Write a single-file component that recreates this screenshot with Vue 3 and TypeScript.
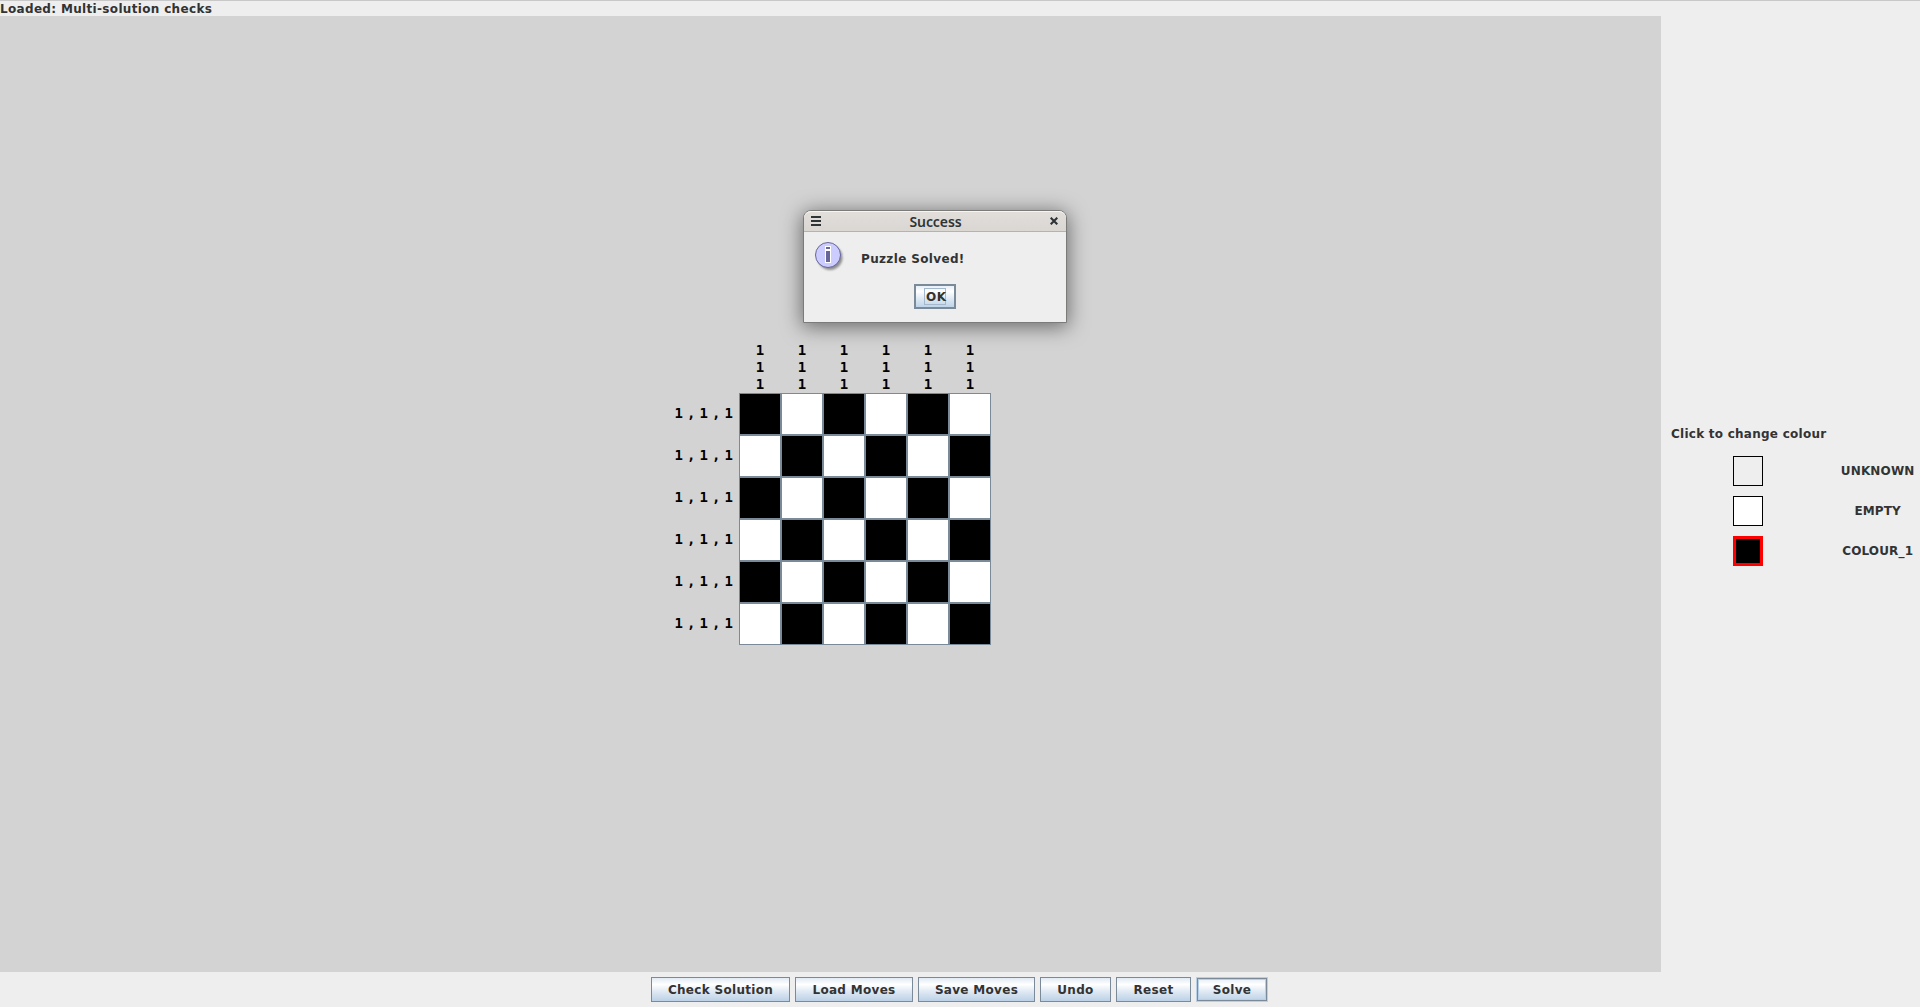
<script setup lang="ts">
const size = 6
const indices = Array.from({ length: size }, (_, i) => i)
const columnClue = ['1', '1', '1']
const rowClue = '1 , 1 , 1'
const filled = (row: number, col: number): boolean => (row + col) % 2 === 0

const colours = [
  { name: 'UNKNOWN', kind: 'unknown' },
  { name: 'EMPTY', kind: 'empty' },
  { name: 'COLOUR_1', kind: 'black' },
]

const actions = [
  { label: 'Check Solution', width: 139 },
  { label: 'Load Moves', width: 118 },
  { label: 'Save Moves', width: 117 },
  { label: 'Undo', width: 71 },
  { label: 'Reset', width: 75 },
  { label: 'Solve', width: 72, focused: true },
]
</script>

<template>
  <div class="window">
    <header class="status">Loaded: Multi-solution checks</header>
    <div class="body">
      <main class="canvas">
        <div class="puzzle">
          <div class="column-clues">
            <div v-for="c in indices" :key="c" class="column-clue">
              <span v-for="(n, i) in columnClue" :key="i">{{ n }}</span>
            </div>
          </div>
          <div v-for="r in indices" :key="r" class="row">
            <div class="row-clue">{{ rowClue }}</div>
            <div v-for="c in indices" :key="c" class="cell" :class="{ filled: filled(r, c) }"></div>
          </div>
        </div>
      </main>
      <aside class="palette">
        <div class="palette-title">Click to change colour</div>
        <div v-for="c in colours" :key="c.name" class="choice">
          <div class="swatch-area"><div class="swatch" :class="c.kind"></div></div>
          <div class="choice-name">{{ c.name }}</div>
        </div>
      </aside>
    </div>
    <footer class="actions">
      <button
        v-for="a in actions"
        :key="a.label"
        class="button"
        :class="{ focused: a.focused }"
        :style="{ width: a.width + 'px' }"
      >{{ a.label }}</button>
    </footer>

    <div class="dialog">
      <div class="titlebar">
        <svg class="menu" width="10" height="10" viewBox="0 0 10 10">
          <path d="M0 0h10v2H0zM0 4h10v2H0zM0 8h10v2H0z" fill="#2e3436" />
        </svg>
        <span class="dialog-title">Success</span>
        <svg class="close" width="8" height="8" viewBox="0 0 8 8">
          <path d="M0.7 0.7L7.3 7.3M7.3 0.7L0.7 7.3" stroke="#2e3436" stroke-width="2.1" fill="none" />
        </svg>
      </div>
      <div class="message">
        <svg class="info" width="32" height="32" viewBox="0 0 32 32">
          <defs>
            <filter id="soft" x="-30%" y="-30%" width="160%" height="160%">
              <feGaussianBlur stdDeviation="1.3" />
            </filter>
          </defs>
          <circle cx="15" cy="15.5" r="12.5" fill="#000" opacity=".4" filter="url(#soft)" />
          <circle cx="13" cy="13" r="12.5" fill="#ccccff" stroke="#666699" />
          <path d="M10 4h6v17h-6z" fill="#fff" />
          <path d="M11 5h4v2h-4zM11 9h4v11h-4z" fill="#666699" />
        </svg>
        <span class="message-text">Puzzle Solved!</span>
      </div>
      <button class="ok"><span class="ok-label">OK</span></button>
    </div>
  </div>
</template>

<style>
body {
  margin: 0;
  overflow: hidden;
}
</style>

<style scoped>
.window {
  position: relative;
  box-sizing: border-box;
  width: 1920px;
  height: 1007px;
  display: flex;
  flex-direction: column;
  border-top: 1px solid #c8c8c8;
  background: #eeeeee;
  color: #333333;
  font: bold 12px/15px "DejaVu Sans", sans-serif;
  letter-spacing: 0.3px;
  white-space: nowrap;
}
.status {
  height: 15px;
  line-height: 17px;
  letter-spacing: 0.33px;
}
.body {
  flex: none;
  height: 956px;
  display: flex;
}
.canvas {
  width: 1661px;
  background: #d3d3d3;
}
.puzzle {
  width: 318px;
  padding: 325px 0 0 673px;
  color: #000;
  font: bold 14px/17px "DejaVu Sans Mono", monospace;
  letter-spacing: 0;
}
.column-clues {
  box-sizing: border-box;
  display: flex;
  height: 52px;
  padding: 1px 0 0 66px;
}
.column-clue {
  width: 42px;
  display: flex;
  flex-direction: column;
  align-items: center;
}
.row {
  display: flex;
  height: 42px;
}
.row-clue {
  width: 60px;
  padding-right: 6px;
  line-height: 40px;
  text-align: right;
  word-spacing: -4.36px;
}
.cell {
  box-sizing: border-box;
  width: 42px;
  height: 42px;
  border: 1px solid #7a8a99;
  background: #fff;
}
.cell.filled {
  background: #000;
}
.palette {
  width: 259px;
  padding-top: 411px;
}
.palette-title {
  height: 24px;
  padding: 0 0 5px 10px;
  letter-spacing: 0.25px;
}
.choice {
  display: flex;
  height: 40px;
  align-items: flex-start;
}
.swatch-area {
  width: 174px;
  display: flex;
  justify-content: center;
}
.swatch {
  box-sizing: border-box;
  width: 30px;
  height: 30px;
  border: 1px solid #000;
}
.swatch.empty {
  background: #fff;
}
.swatch.black {
  border: 3px solid #f00;
  background: #000;
}
.choice-name {
  width: 85px;
  padding-left: 1px;
  line-height: 30px;
  text-align: center;
  letter-spacing: 0.15px;
}
.actions {
  display: flex;
  gap: 5px;
  padding: 5px 0 0 651px;
}
.button,
.ok {
  box-sizing: border-box;
  height: 25px;
  padding: 1px 0 0;
  border: 1px solid #7a8a99;
  border-radius: 0;
  background: linear-gradient(#dde8f3, #fff 30%, #dde8f3 60%, #b8cfe5) border-box;
  color: #333333;
  font: inherit;
  letter-spacing: inherit;
  text-align: center;
}
.button.focused {
  border: 1px solid #b8cfe5;
  box-shadow: inset 0 0 0 1px #7a8a99, inset 0 0 0 2px #b8cfe5;
}
.dialog {
  position: absolute;
  box-sizing: border-box;
  left: 803px;
  top: 209px;
  width: 264px;
  height: 113px;
  border: 1px solid #7b7b79;
  border-radius: 8px 8px 0 0;
  background: #eeeeee;
  box-shadow: 0 3px 20px 1px rgba(0, 0, 0, 0.5);
}
.titlebar {
  box-sizing: border-box;
  height: 21px;
  display: flex;
  align-items: center;
  justify-content: space-between;
  padding: 0 8px 1px 7px;
  border-top: 1px solid #f6f5f4;
  border-bottom: 1px solid #b9b1aa;
  border-radius: 7px 7px 0 0;
  background: linear-gradient(#e1dedb, #dad6d2);
}
.dialog-title {
  padding-top: 2px;
  color: #2e3436;
  font: 600 14px/18px "Noto Sans", sans-serif;
  letter-spacing: -0.1px;
}
.message {
  display: flex;
  padding: 10px 0 0 11px;
  height: 42px;
  box-sizing: border-box;
}
.message-text {
  margin: 10px 0 0 14px;
  letter-spacing: 0.35px;
}
.ok {
  display: block;
  width: 42px;
  margin: 10px 0 0 110px;
  padding: 0;
  border-width: 2px;
}
.ok-label {
  display: block;
  box-sizing: border-box;
  width: 22px;
  height: 17px;
  margin: 0 auto;
  padding-left: 1px;
  border: 1px solid #a3b8cc;
  line-height: 17px;
  letter-spacing: 0.6px;
}
</style>
